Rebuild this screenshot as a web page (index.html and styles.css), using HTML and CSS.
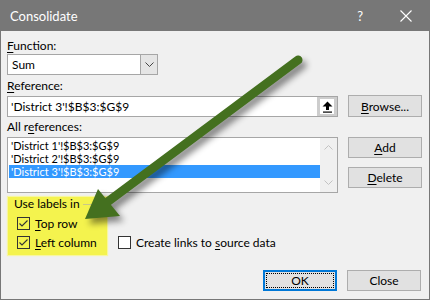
FILE: index.html
```html
<!DOCTYPE html>
<html lang="en">

<head>
    <meta charset="UTF-8">
    <title>Consolidate</title>
    <link rel="stylesheet" href="styles.css">
</head>

<body>
    <div class="window">
        <div class="titlebar">
            <span class="title">Consolidate</span>
            <span class="help">?</span>
            <svg class="close-x" width="12" height="12" viewBox="0 0 12 12">
                <path d="M0.5 0.5 L11.5 11.5 M11.5 0.5 L0.5 11.5" stroke="#fff" stroke-width="1.1" fill="none" />
            </svg>
        </div>

        <div class="content">
            <div class="field-label"><u>F</u>unction:</div>
            <div class="select">
                <span class="select-text">Sum</span>
                <span class="select-btn">
                    <svg width="9" height="5" viewBox="0 0 9 5">
                        <path d="M0.5 0.5 L4.5 4.5 L8.5 0.5" stroke="#444" fill="none" />
                    </svg>
                </span>
            </div>

            <div class="field-label ref-label"><u>R</u>eference:</div>
            <div class="row ref-row">
                <div class="main">
                    <div class="ref-input">
                        <span class="ref-text">'District 3'!$B$3:$G$9</span>
                        <span class="collapse-btn">
                            <span class="collapse-inner">
                                <svg width="11" height="12" viewBox="0 0 11 12">
                                    <path d="M5.5 0.5 L10.5 5.5 L7 5.5 L7 9 L4 9 L4 5.5 L0.5 5.5 Z" fill="#000" />
                                    <rect x="1" y="10.5" width="9" height="1.2" fill="#000" />
                                </svg>
                            </span>
                        </span>
                    </div>
                </div>
                <div class="side">
                    <button class="btn browse"><u>B</u>rowse...</button>
                </div>
            </div>

            <div class="field-label all-label">All r<u>e</u>ferences:</div>
            <div class="row list-row">
                <div class="main">
                    <div class="listbox">
                        <div class="items">
                            <div class="item">'District 1'!$B$3:$G$9</div>
                            <div class="item">'District 2'!$B$3:$G$9</div>
                            <div class="item selected">'District 3'!$B$3:$G$9</div>
                        </div>
                        <div class="scrollbar">
                            <svg width="9" height="5" viewBox="0 0 9 5">
                                <path d="M0.5 4.5 L4.5 0.5 L8.5 4.5" stroke="#c2c2c2" fill="none" />
                            </svg>
                            <svg width="9" height="5" viewBox="0 0 9 5">
                                <path d="M0.5 0.5 L4.5 4.5 L8.5 0.5" stroke="#c2c2c2" fill="none" />
                            </svg>
                        </div>
                    </div>
                </div>
                <div class="side list-buttons">
                    <button class="btn"><u>A</u>dd</button>
                    <button class="btn delete"><u>D</u>elete</button>
                </div>
            </div>

            <div class="options">
                <div class="labels-group">
                    <div class="legend">
                        <span>Use labels in</span>
                        <span class="legend-line"></span>
                    </div>
                    <div class="check-row first">
                        <span class="checkbox checked">
                            <svg width="11" height="11" viewBox="0 0 11 11">
                                <path d="M1.5 5.5 L4 8 L9.5 2.5" stroke="#333" stroke-width="1.1" fill="none" />
                            </svg>
                        </span>
                        <span><u>T</u>op row</span>
                    </div>
                    <div class="check-row">
                        <span class="checkbox checked">
                            <svg width="11" height="11" viewBox="0 0 11 11">
                                <path d="M1.5 5.5 L4 8 L9.5 2.5" stroke="#333" stroke-width="1.1" fill="none" />
                            </svg>
                        </span>
                        <span><u>L</u>eft column</span>
                    </div>
                </div>
                <div class="check-row links">
                    <span class="checkbox"></span>
                    <span>Create links to <u>s</u>ource data</span>
                </div>
            </div>

            <div class="footer">
                <button class="btn ok"><span class="focus">OK</span></button>
                <button class="btn">Close</button>
            </div>
        </div>

        <svg class="pointer" width="430" height="300" viewBox="0 0 430 300">
            <g class="pointer-shape">
                <line x1="298" y1="60" x2="106" y2="203" stroke="#44701f" stroke-width="9" stroke-linecap="round" />
                <polygon points="98,189 85,219 120,216" fill="#44701f" />
            </g>
        </svg>
    </div>
</body>

</html>
```

FILE: styles.css
```css
body {
    margin: 0;
    background-color: #f0f0f0;
    font-family: Lato, "Noto Sans", Arial, sans-serif;
    font-size: 12px;
    color: #000;
}

u {
    text-decoration-thickness: 1px;
    text-underline-offset: 2px;
}

.window {
    position: relative;
    width: 430px;
    height: 300px;
    box-sizing: border-box;
    border: 1px solid #777;
    border-top: none;
    background-color: #f0f0f0;
    overflow: hidden;
}

.titlebar {
    height: 31px;
    margin: 0 -1px;
    background-color: #777;
    display: flex;
    align-items: center;
    color: #fff;
}

.title {
    margin-left: 10px;
    font-size: 13px;
    flex: 1;
}

.help {
    font-size: 13px;
    margin-right: 37px;
}

.close-x {
    margin-right: 18px;
}

.content {
    padding: 7px 7px 0 6px;
}

.field-label {
    height: 16px;
    line-height: 16px;
}

.ref-label {
    margin-top: 3px;
}

.all-label {
    margin-top: 2px;
}

.row {
    display: flex;
    gap: 10px;
}

.main {
    width: 331px;
}

.side {
    width: 74px;
}

.select {
    width: 151px;
    height: 21px;
    box-sizing: border-box;
    border: 1px solid #a6a6a6;
    background-color: #fff;
    display: flex;
}

.select-text {
    flex: 1;
    padding-left: 4px;
    line-height: 19px;
}

.select-btn {
    width: 16px;
    background-color: #e5e5e5;
    border-left: 1px solid #a6a6a6;
    display: flex;
    align-items: center;
    justify-content: center;
}

.ref-row {
    margin-top: 1px;
}

.ref-input {
    margin-top: 1px;
    height: 21px;
    box-sizing: border-box;
    border: 1px solid #a6a6a6;
    background-color: #fff;
    display: flex;
}

.ref-text {
    flex: 1;
    padding-left: 3px;
    line-height: 19px;
}

.collapse-btn {
    width: 20px;
    background-color: #cdcdcd;
    padding: 2px 3px;
    box-sizing: border-box;
    display: flex;
}

.collapse-inner {
    flex: 1;
    background-color: #fff;
    display: flex;
    align-items: center;
    justify-content: center;
}

.btn {
    width: 74px;
    height: 21px;
    box-sizing: border-box;
    border: 1px solid #adadad;
    background-color: #e1e1e1;
    font-family: Lato, "Noto Sans", Arial, sans-serif;
    font-size: 12px;
    color: #000;
    padding: 0;
    display: flex;
    align-items: center;
    justify-content: center;
}

.browse {
    height: 22px;
}

.list-row {
    margin-top: 2px;
}

.listbox {
    height: 56px;
    box-sizing: border-box;
    border: 1px solid #a6a6a6;
    background-color: #fff;
    display: flex;
}

.items {
    flex: 1;
    padding: 1px 0 0 1px;
}

.item {
    height: 13px;
    line-height: 13px;
    font-size: 11px;
    padding-left: 2px;
}

.item.selected {
    background-color: #3399ff;
    color: #fff;
}

.scrollbar {
    width: 17px;
    background-color: #f0f0f0;
    display: flex;
    flex-direction: column;
    align-items: center;
    justify-content: space-between;
    padding: 7px 0;
    box-sizing: border-box;
}

.list-buttons {
    display: flex;
    flex-direction: column;
    gap: 9px;
}

.options {
    margin-top: 4px;
    display: flex;
    align-items: flex-end;
    gap: 11px;
}

.labels-group {
    width: 99px;
    height: 58px;
    margin-left: 1px;
    box-sizing: border-box;
    background-color: #f4f34e;
    box-shadow: 0 0 1px 1px #f7f6a0;
}

.legend {
    height: 14px;
    line-height: 14px;
    padding-left: 6px;
    display: flex;
    align-items: center;
    gap: 3px;
}

.legend-line {
    flex: 1;
    height: 1px;
    background-color: #c9c88a;
}

.check-row {
    height: 19px;
    display: flex;
    align-items: center;
    gap: 5px;
    padding-left: 9px;
}

.check-row.first {
    margin-top: 3px;
}

.check-row.links {
    padding-left: 0;
    margin-bottom: 3px;
}

.checkbox {
    width: 13px;
    height: 13px;
    box-sizing: border-box;
    border: 1px solid #333;
    background-color: #fff;
    display: flex;
    align-items: center;
    justify-content: center;
}

.checkbox.checked {
    background-color: transparent;
}

.footer {
    margin-top: 15px;
    padding-right: 1px;
    display: flex;
    justify-content: flex-end;
    gap: 10px;
}

.btn.ok {
    border: 2px solid #0078d7;
    padding: 1px;
}

.focus {
    width: 100%;
    height: 100%;
    box-sizing: border-box;
    border: 1px dotted #000;
    display: flex;
    align-items: center;
    justify-content: center;
}

.pointer {
    position: absolute;
    left: -1px;
    top: 0;
    pointer-events: none;
}

.pointer-shape {
    filter: drop-shadow(4px 5px 3px rgba(0, 0, 0, 0.45));
}
```
